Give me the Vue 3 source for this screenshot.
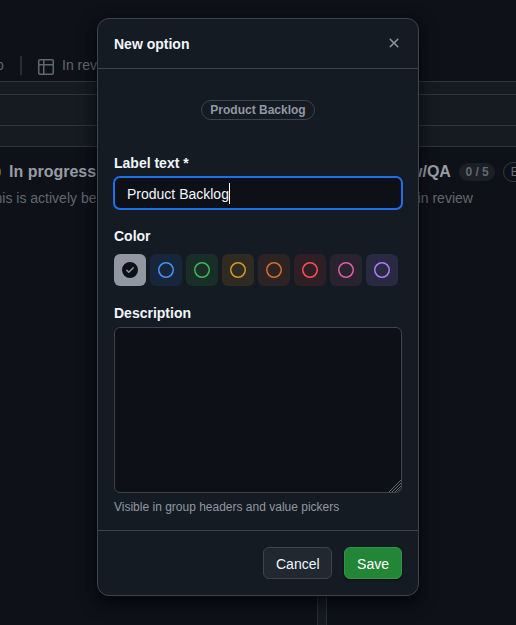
<script setup>
import { ref } from 'vue'

const label = ref('Product Backlog')
const colors = [
  { name: 'gray' },
  { name: 'blue' },
  { name: 'green' },
  { name: 'yellow' },
  { name: 'orange' },
  { name: 'red' },
  { name: 'pink' },
  { name: 'purple' },
]
const selected = ref('gray')
</script>

<template>
  <div class="page">
    <div class="board">
      <nav class="tabs">
        <span class="tab-tail">p</span>
        <span class="tab-divider"></span>
        <svg class="table-icon" width="16" height="16" viewBox="0 0 16 16" fill="none" stroke="currentColor" stroke-width="1.5">
          <rect x="0.75" y="0.75" width="14.5" height="14.5" rx="1" />
          <path d="M.75 5.75h14.5M5.75.75v14.5" />
        </svg>
        <span>In rev</span>
      </nav>
      <div class="filter-area"><div class="filter-box"></div></div>
      <div class="columns">
        <section class="column left">
          <div class="column-head"><i class="status"></i><b>In progress</b></div>
          <p>This is actively being</p>
        </section>
        <section class="column right">
          <div class="column-head">
            <b>In review/QA</b><span class="count">0 / 5</span><span class="estimate">Estimate: 0</span>
          </div>
          <p>This item is in review</p>
        </section>
      </div>
    </div>

    <div class="dialog" role="dialog">
      <header class="dialog-head">
        <h1>New option</h1>
        <button class="close" aria-label="Close">
          <svg width="16" height="16" viewBox="0 0 16 16" fill="currentColor">
            <path d="M3.72 3.72a.75.75 0 0 1 1.06 0L8 6.94l3.22-3.22a.75.75 0 1 1 1.06 1.06L9.06 8l3.22 3.22a.75.75 0 1 1-1.06 1.06L8 9.06l-3.22 3.22a.75.75 0 0 1-1.06-1.06L6.94 8 3.72 4.78a.75.75 0 0 1 0-1.06Z" />
          </svg>
        </button>
      </header>
      <div class="dialog-body">
        <div class="preview"><span class="pill">{{ label }}</span></div>
        <div class="label">Label text *</div>
        <div class="input"><span>{{ label }}</span><i class="caret"></i></div>
        <div class="label color-label">Color</div>
        <div class="swatches">
          <button v-for="c in colors" :key="c.name" class="swatch" :class="c.name" @click="selected = c.name">
            <svg v-if="selected === c.name" width="16" height="16" viewBox="0 0 16 16" fill="currentColor">
              <path d="M8 16A8 8 0 1 1 8 0a8 8 0 0 1 0 16Zm3.78-9.72a.751.751 0 0 0-1.06-1.06L6.75 9.19 5.28 7.72a.751.751 0 0 0-1.06 1.06l2 2a.75.75 0 0 0 1.06 0Z" />
            </svg>
            <svg v-else width="16" height="16" viewBox="0 0 16 16" fill="none" stroke="currentColor" stroke-width="1.5">
              <circle cx="8" cy="8" r="7.25" />
            </svg>
          </button>
        </div>
        <div class="label desc-label">Description</div>
        <div class="desc-wrap">
          <textarea class="desc" aria-label="Description"></textarea>
          <svg class="grip" width="12" height="12" viewBox="0 0 12 12" fill="none" stroke="#73777e" stroke-width="0.9">
            <path d="M0 12 12 0M3 12l9-9M6 12l6-6M8.5 12 12 8.5" />
          </svg>
        </div>
        <div class="hint">Visible in group headers and value pickers</div>
      </div>
      <footer class="dialog-foot">
        <button class="btn">Cancel</button>
        <button class="btn primary">Save</button>
      </footer>
    </div>
  </div>
</template>

<style>
body {
  background: #0e1118;
  overflow: hidden;
}
</style>

<style scoped>
* {
  box-sizing: border-box;
}
button {
  font: inherit;
  margin: 0;
  padding: 0;
  border: 0;
}
svg {
  display: block;
}
.page {
  position: relative;
  width: 516px;
  height: 625px;
  overflow: hidden;
  background: #0e1118;
  font: 14px/20px "Liberation Sans", Arial, sans-serif;
  color: #f0f6fc;
}
.board {
  display: flex;
  flex-direction: column;
  height: 625px;
  color: #62676e;
}
.tabs {
  display: flex;
  align-items: center;
  height: 81px;
  padding: 49px 0 0 0;
  flex: none;
  white-space: nowrap;
}
.tab-tail {
  width: 20px;
  margin-left: -4px;
}
.tab-divider {
  width: 2px;
  height: 19px;
  margin: 0 16px 0 4px;
  background: #282c33;
}
.table-icon {
  margin: 3px 8px 0 0;
}
.filter-area {
  flex: none;
  height: 66px;
  padding-top: 12px;
  background: #161a21;
  border-top: 1px solid #30343b;
  border-bottom: 1px solid #30343b;
}
.filter-box {
  height: 32px;
  border-top: 1px solid #30343b;
  border-bottom: 1px solid #30343b;
}
.columns {
  flex: 1;
  display: flex;
  gap: 8px;
  background: #161a21;
}
.column {
  flex: none;
  padding-top: 15px;
  white-space: nowrap;
  overflow: hidden;
  background: #0e1118;
}
.column.left {
  width: 318px;
  border-right: 1px solid #2a2e35;
}
.column.right {
  width: 350px;
  border-left: 1px solid #2a2e35;
}
.column-head {
  display: flex;
  align-items: center;
  height: 20px;
  font-size: 16px;
  color: #979ca3;
}
.status {
  width: 16px;
  height: 16px;
  margin: 0 8px 0 -15px;
  border: 2px solid #8a6318;
  border-radius: 50%;
}
.column p {
  margin: 6px 0 0;
}
.left p {
  margin-left: -14px;
}
.right .column-head {
  padding-left: 27px;
}
.right p {
  padding-left: 16px;
}
.count,
.estimate {
  flex: none;
  height: 18px;
  margin-left: 8px;
  padding: 0 6.5px;
  border-radius: 10px;
  background: #1b1f26;
  color: #646970;
  font: bold 12px/18px "Liberation Sans", Arial, sans-serif;
}
.estimate {
  height: 20px;
  margin-left: 8px;
  border: 1px solid #343941;
  background: none;
  font-weight: normal;
}
.dialog {
  position: absolute;
  left: 97px;
  top: 18px;
  width: 322px;
  height: 578px;
  display: flex;
  flex-direction: column;
  border: 1px solid #3d444d;
  border-radius: 12px;
  background: #151b23;
  box-shadow: 0 6px 12px -3px rgba(1, 4, 9, 0.5), 0 6px 18px rgba(1, 4, 9, 0.5);
}
.dialog-head {
  flex: none;
  display: flex;
  justify-content: space-between;
  align-items: center;
  height: 50px;
  padding: 0 16px;
  border-bottom: 1px solid #3d444d;
}
h1 {
  margin: 0;
  font-size: 14px;
  line-height: 20px;
}
.close {
  margin-bottom: 2px;
  background: none;
  color: #9198a1;
}
.dialog-body {
  flex: 1;
  min-height: 0;
  display: flex;
  flex-direction: column;
  padding: 16px 16px 12px;
}
.preview {
  flex: none;
  display: flex;
  justify-content: center;
  align-items: center;
  height: 50px;
  margin-bottom: 1px;
}
.pill {
  height: 20px;
  padding: 0 8px;
  border: 1px solid #3d444d;
  border-radius: 10px;
  color: #9198a1;
  font-size: 12px;
  line-height: 19px;
  font-weight: bold;
}
.label {
  flex: none;
  height: 20px;
  margin-top: 17px;
  font-weight: bold;
}
.input {
  flex: none;
  display: flex;
  align-items: center;
  height: 34px;
  margin: 3px -1px 0;
  padding-left: 12px;
  border: 2px solid #1f6feb;
  border-radius: 7px;
  background: #0d1117;
}
.input span {
  padding-top: 2px;
}
.caret {
  width: 1px;
  height: 21px;
  background: #fff;
}
.color-label {
  margin-top: 16px;
}
.swatches {
  flex: none;
  display: flex;
  gap: 4px;
  margin-top: 8px;
}
.swatch {
  display: grid;
  place-items: center;
  width: 32px;
  height: 32px;
  border-radius: 6px;
}
.gray { background: #9198a1; color: #0d1117; }
.blue { background: #18263c; color: #4493f8; }
.green { background: #1a2e29; color: #3fb950; }
.yellow { background: #302b22; color: #d29922; }
.orange { background: #2b2324; color: #db6d28; }
.red { background: #2e1f26; color: #f85149; }
.pink { background: #292330; color: #db61a2; }
.purple { background: #2a2942; color: #ab7df8; }
.desc-label {
  margin-top: 17px;
}
.desc-wrap {
  position: relative;
  flex: none;
  height: 166px;
  margin-top: 4px;
}
.desc {
  display: block;
  width: 288px;
  height: 166px;
  margin: 0;
  border: 1px solid #3d444d;
  border-radius: 6px;
  background: #0d1117;
  color: #e6edf3;
  font: inherit;
  resize: none;
  outline: none;
}
.grip {
  position: absolute;
  right: 1px;
  bottom: 1px;
  border-bottom-right-radius: 5px;
  overflow: hidden;
}
.hint {
  flex: none;
  margin-top: 5px;
  font-size: 12px;
  line-height: 18px;
  color: #9198a1;
}
.dialog-foot {
  flex: none;
  display: flex;
  justify-content: flex-end;
  gap: 12px;
  height: 65px;
  padding: 16px;
  border-top: 1px solid #3d444d;
}
.btn {
  height: 32px;
  padding: 1px 11.5px 0;
  border: 1px solid #3d444d;
  border-radius: 6px;
  background: #212830;
  color: #f0f6fc;
}
.primary {
  padding: 1px 12px 0;
  border-color: #359345;
  background: #238636;
  color: #fff;
  box-shadow: 0 1px 2px rgba(1, 4, 9, 0.6);
}
</style>
